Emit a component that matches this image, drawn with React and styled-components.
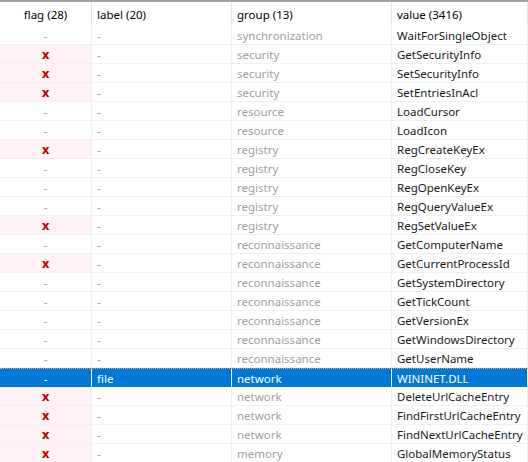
import styled, { createGlobalStyle } from 'styled-components';

const GlobalStyle = createGlobalStyle`
  html, body {
    margin: 0;
    padding: 0;
    background: #ffffff;
  }
  body {
    font-family: "Noto Sans", "Open Sans", sans-serif;
    font-size: 11.5px;
  }
`;

const COLS = '92px 140px 160px 136px';

const ListView = styled.div`
  width: 528px;
  height: 462px;
  overflow: hidden;
  background: #ffffff;
  border-top: 2px solid #a0a0a0;
  box-sizing: border-box;
`;

const HeaderRow = styled.div`
  display: grid;
  grid-template-columns: ${COLS};
  height: 24px;
`;

const HeaderCell = styled.div`
  display: flex;
  align-items: center;
  justify-content: ${(p) => (p.$center ? 'center' : 'flex-start')};
  padding: 1px 5px 0;
  color: #000000;
  border-right: 1px solid #e5e5e5;
  white-space: nowrap;
  overflow: hidden;
`;

const Row = styled.div`
  display: grid;
  grid-template-columns: ${COLS};
  height: 19px;
  background: ${(p) => (p.$selected ? '#0078d7' : 'transparent')};
  box-sizing: border-box;
  border-top: ${(p) => (p.$selected ? '1px dotted #f0a050' : 'none')};
`;

const Cell = styled.div`
  display: flex;
  align-items: center;
  justify-content: ${(p) => (p.$center ? 'center' : 'flex-start')};
  padding: 1px 5px 0;
  box-sizing: border-box;
  border-right: 1px solid ${(p) => (p.$selected ? '#ffffff' : '#f0f0f0')};
  border-bottom: 1px solid ${(p) => (p.$selected ? '#0078d7' : '#f0f0f0')};
  background: ${(p) => (p.$flagged ? '#fff2f7' : 'transparent')};
  color: ${(p) => (p.$selected ? '#ffffff' : p.$muted ? '#a0a0a0' : '#1a1a1a')};
  white-space: nowrap;
  overflow: hidden;
`;

const Cross = styled.span`
  color: #c00000;
  font-weight: bold;
  font-family: "DejaVu Sans", "Open Sans", sans-serif;
  font-size: 12px;
`;

const rows = [
  [0, '-', 'synchronization', 'WaitForSingleObject'],
  [1, '-', 'security', 'GetSecurityInfo'],
  [1, '-', 'security', 'SetSecurityInfo'],
  [1, '-', 'security', 'SetEntriesInAcl'],
  [0, '-', 'resource', 'LoadCursor'],
  [0, '-', 'resource', 'LoadIcon'],
  [1, '-', 'registry', 'RegCreateKeyEx'],
  [0, '-', 'registry', 'RegCloseKey'],
  [0, '-', 'registry', 'RegOpenKeyEx'],
  [0, '-', 'registry', 'RegQueryValueEx'],
  [1, '-', 'registry', 'RegSetValueEx'],
  [0, '-', 'reconnaissance', 'GetComputerName'],
  [1, '-', 'reconnaissance', 'GetCurrentProcessId'],
  [0, '-', 'reconnaissance', 'GetSystemDirectory'],
  [0, '-', 'reconnaissance', 'GetTickCount'],
  [0, '-', 'reconnaissance', 'GetVersionEx'],
  [0, '-', 'reconnaissance', 'GetWindowsDirectory'],
  [0, '-', 'reconnaissance', 'GetUserName'],
  [0, 'file', 'network', 'WININET.DLL', true],
  [1, '-', 'network', 'DeleteUrlCacheEntry'],
  [1, '-', 'network', 'FindFirstUrlCacheEntry'],
  [1, '-', 'network', 'FindNextUrlCacheEntry'],
  [1, '-', 'memory', 'GlobalMemoryStatus'],
];

export default function App() {
  return (
    <>
      <GlobalStyle />
      <ListView>
        <HeaderRow>
          <HeaderCell $center>flag (28)</HeaderCell>
          <HeaderCell>label (20)</HeaderCell>
          <HeaderCell>group (13)</HeaderCell>
          <HeaderCell>value (3416)</HeaderCell>
        </HeaderRow>
        {rows.map(([flag, label, group, value, selected], i) => (
          <Row key={i} $selected={selected}>
            <Cell $center $flagged={flag && !selected} $muted $selected={selected}>
              {flag ? <Cross>x</Cross> : '-'}
            </Cell>
            <Cell $muted={label === '-'} $selected={selected}>{label}</Cell>
            <Cell $muted $selected={selected}>{group}</Cell>
            <Cell $selected={selected}>{value}</Cell>
          </Row>
        ))}
      </ListView>
    </>
  );
}
